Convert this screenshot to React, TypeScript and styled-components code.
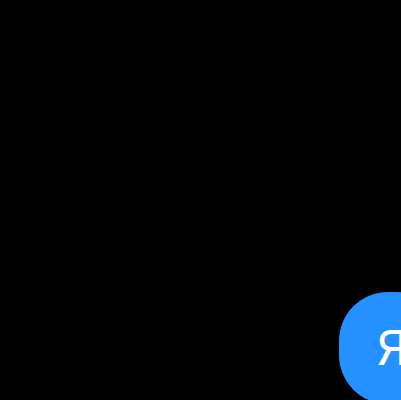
import React from "react";
import styled, { createGlobalStyle } from "styled-components";

const Global = createGlobalStyle`
  html, body { margin: 0; padding: 0; background: #000; overflow: hidden; }
`;

const Screen = styled.main`
  width: 401px;
  height: 400px;
  box-sizing: border-box;
  padding: 292px 0 0 339px;
  background: #000;
  overflow: hidden;
  display: flex;
  align-items: flex-start;
`;

const AppIcon = styled.div`
  flex: 0 0 107px;
  width: 107px;
  height: 112px;
  border-radius: 49px;
  background: #2590ff;
  display: flex;
  align-items: center;
  justify-content: center;
`;

const Letter = styled.span`
  font-family: Inter, "Noto Sans", sans-serif;
  font-size: 48px;
  font-weight: 400;
  line-height: 1;
  color: #fff;
`;

export default function App() {
  return (
    <>
      <Global />
      <Screen>
        <AppIcon>
          <Letter>Я</Letter>
        </AppIcon>
      </Screen>
    </>
  );
}
